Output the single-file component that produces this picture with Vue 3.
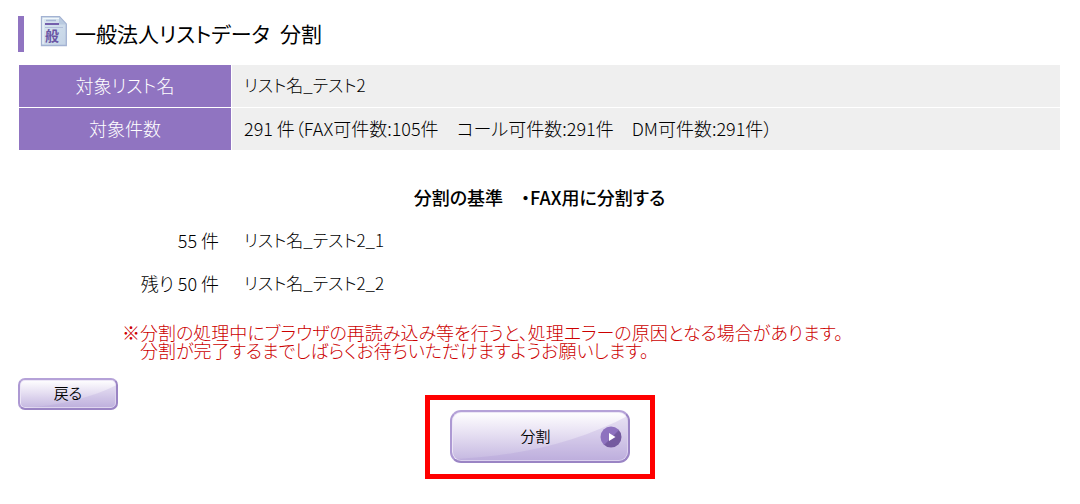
<script setup>
const targets = [
  { label: '対象リスト名', value: 'リスト名_テスト2', name: true },
  { label: '対象件数', value: '291 件（FAX可件数:105件　コール可件数:291件　DM可件数:291件）', name: false },
]
const parts = [
  { count: '55 件', name: 'リスト名_テスト2_1' },
  { count: '残り 50 件', name: 'リスト名_テスト2_2' },
]
</script>

<template>
  <main class="page">
    <header class="title">
      <svg class="doc" width="28" height="32" viewBox="0 0 28 32" aria-hidden="true">
        <defs>
          <linearGradient id="paper" x1="0" y1="0" x2="1" y2="1">
            <stop offset="0" stop-color="#dce9f2" />
            <stop offset="1" stop-color="#c3d2e5" />
          </linearGradient>
        </defs>
        <path d="M1.5 .7H19.500L26.300 8V29.500H1.500Z" fill="url(#paper)" stroke="#a3b2d2" stroke-width="1.300" />
        <path d="M3 28V2.500H19" fill="none" stroke="#f1f7fb" />
        <path d="M19 1L26 8.500H19Z" fill="#b9cae0" />
        <path d="M6 4.500H16" stroke="#a7b4d4" stroke-width="1.500" />
        <path d="M5 8H19" stroke="#7460ac" stroke-width="2" />
        <path d="M5 11.500H23" stroke="#b2bfda" />
        <text x="12" y="25" text-anchor="middle" class="doc-mark">般</text>
      </svg>
      <h1><span>一般法人リストデータ</span> <span>分割</span></h1>
    </header>

    <table class="targets">
      <tbody>
        <tr v-for="row in targets" :key="row.label">
          <th scope="row">{{ row.label }}</th>
          <td :class="{ name: row.name }">{{ row.value }}</td>
        </tr>
      </tbody>
    </table>

    <h2>分割の基準　・FAX用に分割する</h2>

    <table class="parts">
      <tbody>
        <tr v-for="row in parts" :key="row.name">
          <th scope="row">{{ row.count }}</th>
          <td class="name">{{ row.name }}</td>
        </tr>
      </tbody>
    </table>

    <p class="notice">
      ※分割の処理中にブラウザの再読み込み等を行うと、処理エラーの原因となる場合があります。<br />
      　分割が完了するまでしばらくお待ちいただけますようお願いします。
    </p>

    <button type="button" class="btn back">
      <svg class="shine" viewBox="0 0 100 32" preserveAspectRatio="none" aria-hidden="true">
        <path d="M0 32C40 30 75 20 100 6V32Z" fill="#a48fd0" fill-opacity=".2" />
      </svg>
      <span>戻る</span>
    </button>

    <div class="frame">
      <button type="button" class="btn split">
        <svg class="shine" viewBox="0 0 180 53" preserveAspectRatio="none" aria-hidden="true">
          <path d="M0 51C70 48 130 32 180 4V53H0Z" fill="#a48fd0" fill-opacity=".22" />
        </svg>
        <span>分割</span>
        <svg class="arrow" width="22" height="22" viewBox="0 0 22 22" aria-hidden="true">
          <defs>
            <linearGradient id="disc" x1="0" y1="0" x2="1" y2="1">
              <stop offset=".5" stop-color="#8e72bf" />
              <stop offset=".55" stop-color="#745a9f" />
            </linearGradient>
          </defs>
          <circle cx="11" cy="11" r="10.500" fill="url(#disc)" />
          <path d="M9 7L15.500 11L9 15Z" fill="#fff" />
        </svg>
      </button>
    </div>
  </main>
</template>

<style>
body {
  background: #fff;
}
</style>

<style scoped>
.page {
  padding: 16px 19px 20px 18px;
  font-family: "Noto Sans CJK JP", sans-serif;
  font-size: 18px;
  font-weight: 300;
  font-feature-settings: "palt";
  line-height: 18px;
  color: #000;
}
.title {
  display: flex;
  align-items: flex-start;
  gap: 7px;
  height: 36px;
  padding-left: 16px;
  border-left: 6px solid #9074c1;
}
.doc-mark {
  font-size: 14px;
  font-weight: 700;
  fill: #6a55a4;
}
h1 {
  display: flex;
  gap: 10px;
  margin: 0;
  font-size: 21px;
  font-weight: 400;
  line-height: 34px;
}
table {
  width: 100%;
  border-spacing: 1px;
  table-layout: fixed;
}
.targets {
  margin-top: 12px;
}
th,
td {
  height: 42px;
  padding: 0 12px 2px;
  box-sizing: border-box;
  font-weight: 300;
  text-align: left;
}
th {
  width: 212px;
}
.name {
  font-size: 17px;
}
.targets th {
  background: #9074c1;
  color: #fff;
  text-align: center;
}
.targets td {
  background: #efefef;
}
.parts th {
  text-align: right;
}
h2 {
  margin: 24px 0 0;
  font-size: 18px;
  font-weight: 500;
  line-height: 44px;
  text-align: center;
}
.notice {
  margin: 17px 0 19px 104px;
  color: #c00;
}
.btn {
  position: relative;
  display: flex;
  align-items: center;
  justify-content: center;
  padding: 0 0 2px;
  overflow: hidden;
  border: 2px solid;
  border-color: #b5a2d8 #9a84c4 #9a84c4 #ad99d3;
  border-radius: 7px;
  background: linear-gradient(#fff, #e6dff2 45%, #c4b7e0);
  box-shadow: inset 0 0 0 1px #ece6f6;
  font: inherit;
  font-size: 15px;
  font-weight: 350;
  color: #000;
}
.back {
  width: 100px;
  height: 32px;
}
.split {
  width: 180px;
  height: 53px;
  border-radius: 11px;
  padding-right: 8px;
}
.shine {
  position: absolute;
  inset: 0;
  width: 100%;
  height: 100%;
}
.btn span {
  position: relative;
}
.arrow {
  position: absolute;
  right: 6px;
  top: 50%;
  margin-top: -11px;
}
.frame {
  width: fit-content;
  margin: -15px auto 0;
  padding: 10px 20px 11px;
  border: 5px solid #f00;
}
</style>
